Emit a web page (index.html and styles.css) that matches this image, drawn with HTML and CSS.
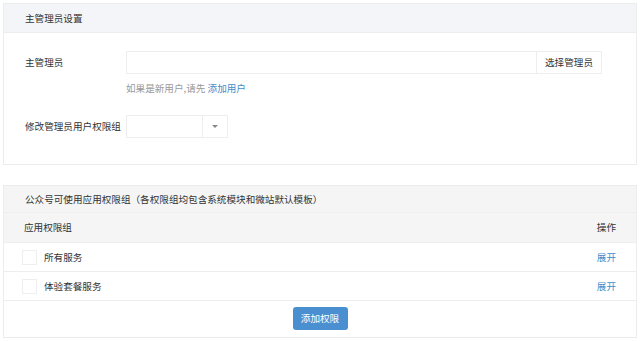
FILE: index.html
```html
<!DOCTYPE html>
<html>
    <head>
        <meta charset="utf-8">
        <title></title>
        <link rel="stylesheet" href="styles.css">
    </head>
    <body>
        <div class="panel">
            <div class="panel-heading">主管理员设置</div>
            <div class="panel-body">
                <div class="form-row">
                    <div class="form-label">主管理员</div>
                    <div class="form-field">
                        <div class="input-group">
                            <div class="input wide"></div>
                            <div class="input-btn">选择管理员</div>
                        </div>
                        <div class="help">如果是新用户,请先 <a class="link">添加用户</a></div>
                    </div>
                </div>
                <div class="form-row">
                    <div class="form-label">修改管理员用户权限组</div>
                    <div class="form-field">
                        <div class="select">
                            <div class="select-value"></div>
                            <div class="select-arrow"><span class="caret"></span></div>
                        </div>
                    </div>
                </div>
            </div>
        </div>

        <div class="panel second">
            <div class="panel-heading alt">公众号可使用应用权限组（各权限组均包含系统模块和微站默认模板）</div>
            <div class="table">
                <div class="table-row head">
                    <div class="cell">应用权限组</div>
                    <div class="cell op">操作</div>
                </div>
                <div class="table-row">
                    <div class="cell"><span class="check"></span>所有服务</div>
                    <div class="cell op"><a class="link">展开</a></div>
                </div>
                <div class="table-row">
                    <div class="cell"><span class="check"></span>体验套餐服务</div>
                    <div class="cell op"><a class="link">展开</a></div>
                </div>
            </div>
            <div class="panel-footer">
                <div class="btn-primary">添加权限</div>
            </div>
        </div>
    </body>
</html>
```

FILE: styles.css
```css
body {
    margin: 3px 4px 0 3px;
    font-family: "Noto Sans CJK SC", "Liberation Sans", sans-serif;
    font-size: 9.6px;
    color: #333;
    background: #fff;
}

.panel {
    border: 1px solid #ececec;
}

.second {
    margin-top: 20px;
}

.panel-heading {
    height: 28px;
    line-height: 28px;
    padding-left: 21px;
    background: #f4f5f9;
    border-bottom: 1px solid #eeeeee;
}

.panel-heading.alt {
    height: 26px;
    line-height: 26px;
    background: #f5f5f5;
}

.panel-body {
    padding: 18px 0 26px 0;
}

.form-row {
    display: flex;
}

.form-row + .form-row {
    margin-top: 19px;
}

.form-label {
    width: 101px;
    padding-left: 21px;
    line-height: 23px;
}

.input-group {
    display: flex;
    height: 23px;
}

.input {
    border: 1px solid #eeeeee;
    box-sizing: border-box;
}

.wide {
    width: 411px;
}

.input-btn {
    width: 65px;
    box-sizing: border-box;
    border: 1px solid #eeeeee;
    border-left: none;
    text-align: center;
    line-height: 21px;
}

.help {
    color: #999;
    margin-top: 6px;
    line-height: 16px;
}

.link {
    color: #428bca;
    text-decoration: none;
}

.select {
    display: flex;
    width: 102px;
    height: 23px;
    box-sizing: border-box;
    border: 1px solid #eeeeee;
}

.select-value {
    flex: 1;
}

.select-arrow {
    width: 24px;
    border-left: 1px solid #eeeeee;
    display: flex;
    align-items: center;
    justify-content: center;
}

.caret {
    width: 0;
    height: 0;
    border-left: 3px solid transparent;
    border-right: 3px solid transparent;
    border-top: 3px solid #888;
}

.table-row {
    display: flex;
    justify-content: space-between;
    height: 28px;
    line-height: 28px;
    border-bottom: 1px solid #eeeeee;
}

.table-row.head {
    height: 29px;
    line-height: 29px;
    background: #f5f5f5;
}

.cell {
    display: flex;
    align-items: center;
    padding-left: 20px;
}

.cell.op {
    padding-left: 0;
    padding-right: 20px;
}

.check {
    width: 13px;
    height: 13px;
    border: 1px solid #eeeeee;
    margin-left: -2px;
    margin-right: 7px;
}

.panel-footer {
    display: flex;
    justify-content: center;
    padding: 6px 0 7px 0;
}

.btn-primary {
    width: 55px;
    height: 23px;
    line-height: 23px;
    text-align: center;
    color: #fff;
    background: #4a8fd0;
    border-radius: 3px;
}
```
